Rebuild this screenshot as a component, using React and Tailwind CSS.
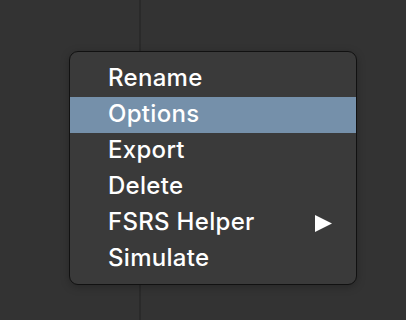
import React from "react";

const items = ["Rename", "Options", "Export", "Delete", "FSRS Helper", "Simulate"];

export default function App() {
  return (
    <div className="relative w-[406px] h-[320px] overflow-hidden bg-[#333333]" style={{ fontFamily: "Inter, 'Noto Sans', sans-serif" }}>
      <div className="flex h-full">
        <div className="w-[139px] h-full" />
        <div className="w-[2px] h-full bg-[#2a2a2a]" />
        <div className="flex-1 h-full" />
      </div>
      <div className="absolute left-[69px] top-[51px] w-[288px] h-[234px] rounded-[9px] border border-[#111111] bg-[#3a3a3a] shadow-[0_2px_8px_rgba(0,0,0,0.25)] pt-[9px]">
        {items.map((t) => (
          <div
            key={t}
            className={
              "flex items-center h-[36px] pl-[38px] pr-[24px] text-[24px] font-medium tracking-[0.3px] text-white " +
              (t === "Options" ? "bg-[#7590aa]" : "")
            }
          >
            <span className="flex-1 leading-none pb-[2px]">{t}</span>
            {t === "FSRS Helper" && (
              <svg width="17" height="17" viewBox="0 0 17 17">
                <polygon points="0,0 17,8.5 0,17" fill="white" />
              </svg>
            )}
          </div>
        ))}
      </div>
    </div>
  );
}
